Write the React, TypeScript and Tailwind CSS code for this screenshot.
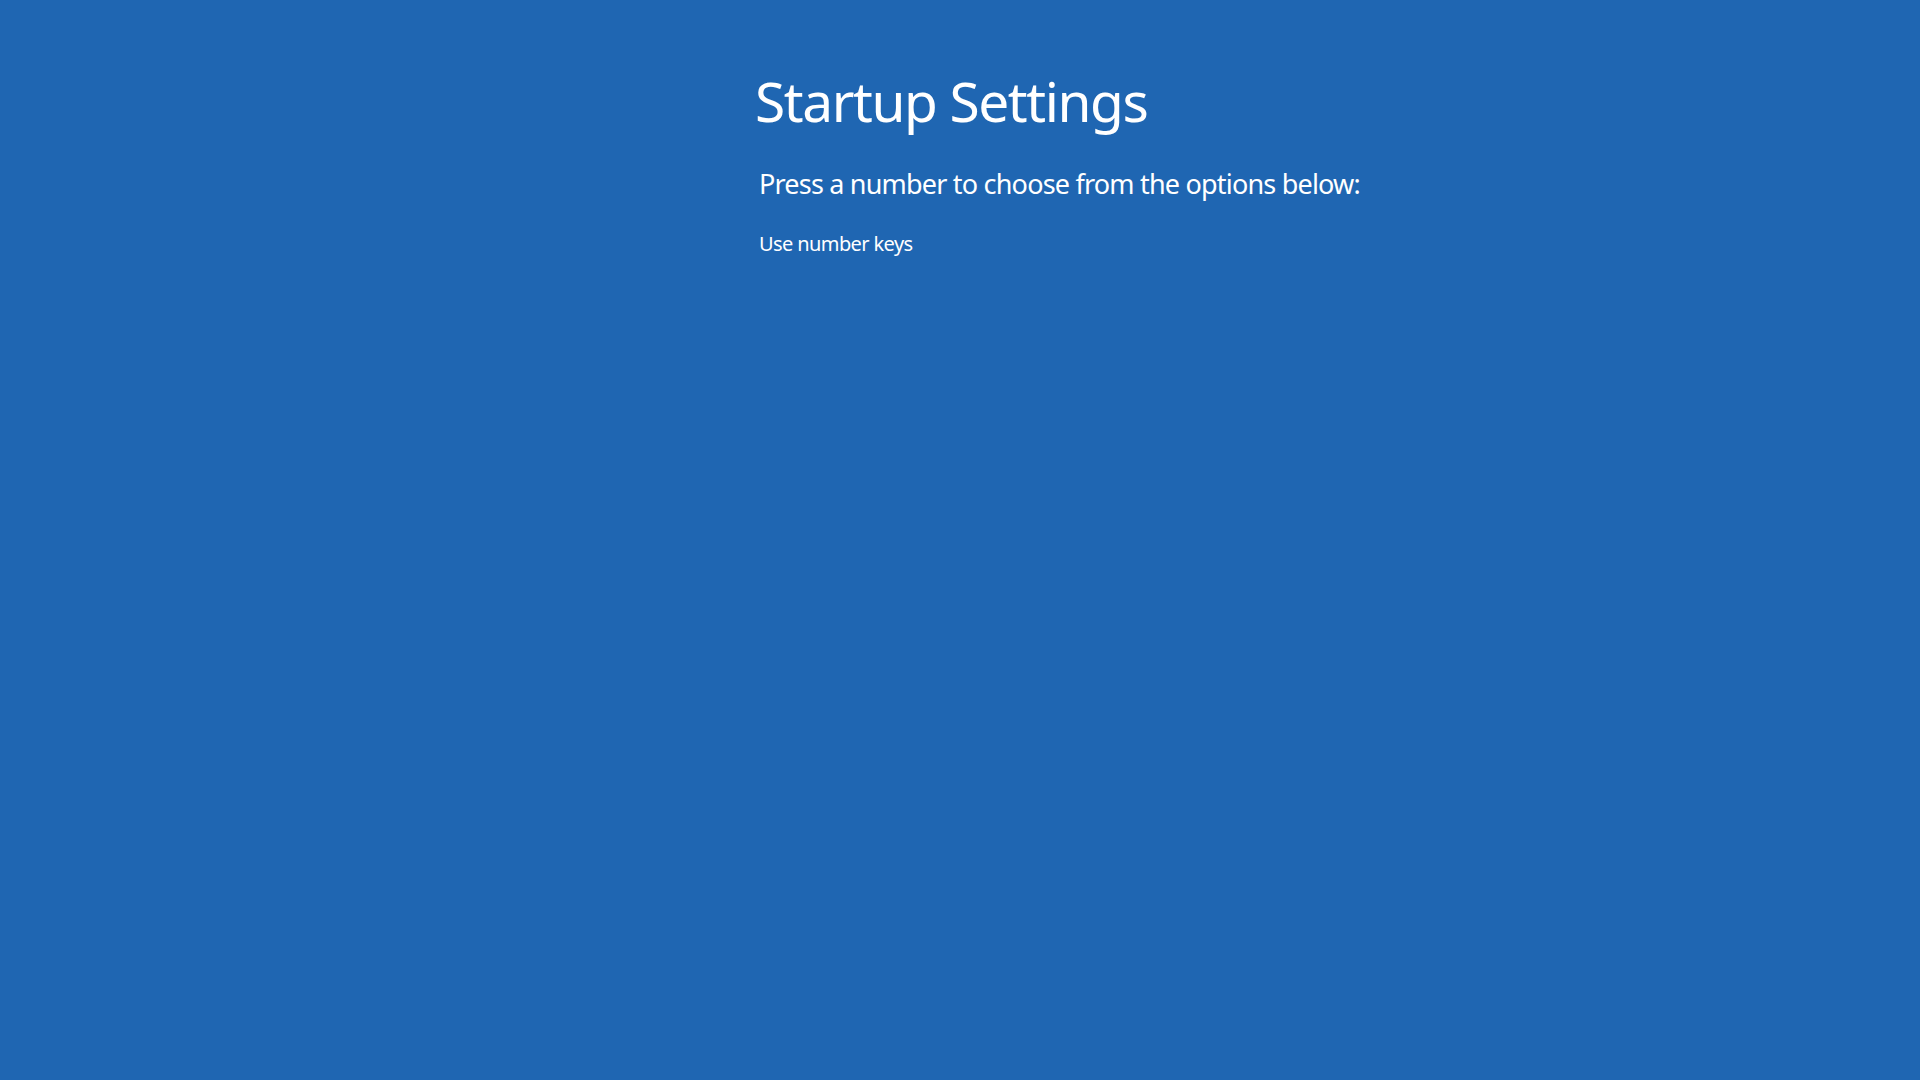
export default function App() {
  return (
    <div className="min-h-screen w-full bg-[#1f66b2] text-white font-['Noto_Sans',sans-serif]">
      <div className="flex flex-col pl-[755px] pt-[66px]">
        <h1 className="text-[55px] leading-[70px] font-normal tracking-[-1.4px]">Startup Settings</h1>
        <p className="mt-[30px] pl-[4px] text-[27px] leading-[36px] tracking-[-0.8px]">
          Press a number to choose from the options below:
        </p>
        <p className="mt-[28px] pl-[4px] text-[20px] leading-[28px] tracking-[-0.6px]">Use number keys</p>
      </div>
    </div>
  );
}
